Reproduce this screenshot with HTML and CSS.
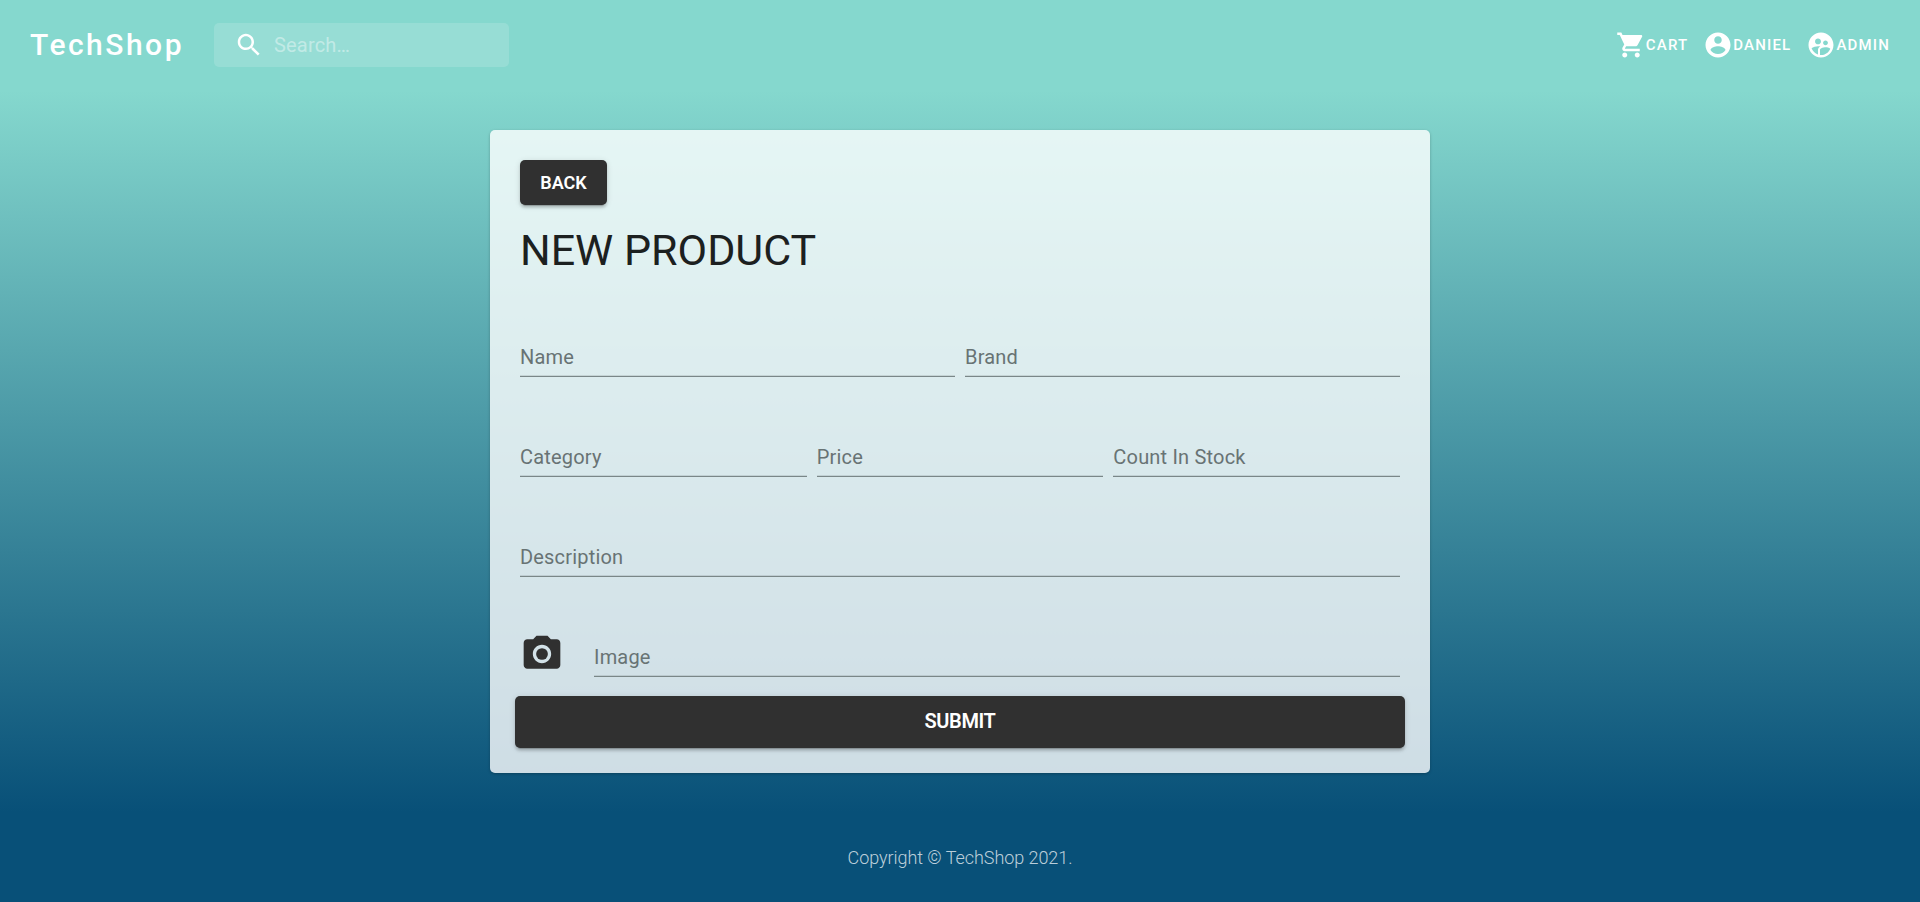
FILE: index.html
```html
<!DOCTYPE html>
<html lang="en">
<head>
<meta charset="utf-8">
<title>TechShop</title>
<link rel="stylesheet" href="styles.css">
</head>
<body>
<header class="navbar">
  <a class="brand">TechShop</a>
  <div class="search">
    <svg class="icon" viewBox="0 0 24 24"><path d="M15.5 14h-.79l-.28-.27C15.41 12.59 16 11.11 16 9.5 16 5.91 13.09 3 9.5 3S3 5.91 3 9.5 5.91 16 9.5 16c1.61 0 3.09-.59 4.23-1.57l.27.28v.79l5 4.99L20.49 19l-4.99-5zm-6 0C7.01 14 5 11.99 5 9.5S7.01 5 9.5 5 14 7.01 14 9.5 11.99 14 9.5 14z"/></svg>
    <span class="search-text">Search…</span>
  </div>
  <nav class="links">
    <a class="link"><svg class="icon" viewBox="0 0 24 24"><path d="M7 18c-1.100 0-1.990.9-1.990 2S5.900 22 7 22s2-.9 2-2-.9-2-2-2zM1 2v2h2l3.600 7.590-1.350 2.450c-.16.28-.25.61-.25.96 0 1.100.9 2 2 2h12v-2H7.420c-.14 0-.25-.11-.25-.25l.03-.12.9-1.630h7.450c.75 0 1.410-.41 1.750-1.030l3.580-6.490c.08-.14.12-.31.12-.48 0-.55-.45-1-1-1H5.210l-.94-2H1zm16 16c-1.100 0-1.990.9-1.990 2s.89 2 1.990 2 2-.9 2-2-.9-2-2-2z"/></svg><span class="link-text">CART</span></a>
    <a class="link"><svg class="icon" viewBox="0 0 24 24"><path d="M12 2C6.480 2 2 6.480 2 12s4.480 10 10 10 10-4.480 10-10S17.520 2 12 2zm0 3c1.660 0 3 1.340 3 3s-1.340 3-3 3-3-1.340-3-3 1.340-3 3-3zm0 14.200c-2.500 0-4.710-1.280-6-3.220.03-1.990 4-3.080 6-3.080 1.990 0 5.970 1.090 6 3.080-1.290 1.940-3.500 3.220-6 3.220z"/></svg><span class="link-text">DANIEL</span></a>
    <a class="link"><svg class="icon" viewBox="0 0 24 24"><path d="M11.990 2c-5.520 0-10 4.480-10 10s4.480 10 10 10 10-4.480 10-10-4.480-10-10-10zm3.610 6.340c1.070 0 1.930.86 1.930 1.930 0 1.070-.86 1.930-1.930 1.930-1.070 0-1.930-.86-1.930-1.930-.01-1.070.86-1.930 1.930-1.930zm-6-1.580c1.300 0 2.360 1.060 2.360 2.360 0 1.300-1.060 2.360-2.360 2.360s-2.360-1.060-2.360-2.360c0-1.310 1.050-2.360 2.360-2.360zm0 9.130v3.750c-2.400-.75-4.300-2.600-5.140-4.960 1.050-1.120 3.670-1.690 5.140-1.690.53 0 1.200.08 1.900.22-1.640.87-1.900 2.020-1.900 2.680zM11.990 20c-.27 0-.53-.01-.79-.04v-4.070c0-1.420 2.940-2.130 4.400-2.130 1.070 0 2.920.39 3.840 1.150-1.170 2.970-4.060 5.090-7.450 5.090z"/></svg><span class="link-text">ADMIN</span></a>
  </nav>
</header>
<main class="page">
  <section class="card">
    <button class="button back">BACK</button>
    <h1 class="title">NEW PRODUCT</h1>
    <form class="form">
      <div class="row">
        <label class="field"><span class="label">Name</span></label>
        <label class="field"><span class="label">Brand</span></label>
      </div>
      <div class="row">
        <label class="field"><span class="label">Category</span></label>
        <label class="field"><span class="label">Price</span></label>
        <label class="field"><span class="label">Count In Stock</span></label>
      </div>
      <div class="row">
        <label class="field"><span class="label">Description</span></label>
      </div>
      <div class="row image-row">
        <svg class="camera" viewBox="0 0 24 24"><circle cx="12" cy="12" r="3.200"/><path d="M9 2L7.170 4H4c-1.100 0-2 .9-2 2v12c0 1.100.9 2 2 2h16c1.100 0 2-.9 2-2V6c0-1.100-.9-2-2-2h-3.170L15 2H9zm3 15c-2.760 0-5-2.240-5-5s2.240-5 5-5 5 2.240 5 5-2.240 5-5 5z"/></svg>
        <label class="field"><span class="label">Image</span></label>
      </div>
      <button class="button submit" type="button">SUBMIT</button>
    </form>
  </section>
</main>
<footer class="footer">Copyright © TechShop 2021.</footer>
</body>
</html>
```
FILE: styles.css
```css
* { box-sizing: border-box; }

body {
  margin: 0;
  height: 902px;
  overflow: hidden;
  display: flex;
  flex-direction: column;
  font-family: Roboto, "Liberation Sans", sans-serif;
  background: linear-gradient(to bottom, #85d8ce 10%, #085078 90%);
}

.navbar {
  height: 90px;
  padding: 0 30px;
  display: flex;
  align-items: center;
  color: #fff;
}

.brand {
  width: 184px;
  font-size: 30px;
  font-weight: 500;
  letter-spacing: 2.5px;
  line-height: 40px;
}

.icon {
  width: 30px;
  height: 30px;
  flex: none;
  fill: currentColor;
}

.search {
  width: 295px;
  height: 44px;
  padding-left: 20px;
  display: flex;
  align-items: center;
  border-radius: 5px;
  background: rgba(255, 255, 255, 0.15);
}

.search-text {
  margin-left: 10px;
  font-size: 20px;
  line-height: 24px;
  letter-spacing: 0.19px;
  color: rgba(255, 255, 255, 0.42);
}

.links {
  margin-left: auto;
  display: flex;
  gap: 15px;
}

.link {
  display: flex;
  align-items: center;
}

.link-text {
  font-size: 15px;
  font-weight: 500;
  letter-spacing: 1.17px;
}

.page {
  height: 722px;
  padding-top: 40px;
}

.card {
  width: 940px;
  height: 643px;
  margin: 0 auto;
  padding: 30px;
  display: flex;
  flex-direction: column;
  border-radius: 5px;
  background: rgba(255, 255, 255, 0.8);
  box-shadow: 0 1px 3px rgba(0, 0, 0, 0.25);
}

.button {
  border: 0;
  padding: 0;
  flex: none;
  border-radius: 5px;
  background: #303030;
  color: #fff;
  font-family: inherit;
  font-weight: 600;
  box-shadow: 0 4px 1px -3px rgba(0, 0, 0, 0.2), 0 2.5px 2.5px rgba(0, 0, 0, 0.14), 0 1px 6px rgba(0, 0, 0, 0.12);
}

.back {
  width: 87px;
  height: 45px;
  font-size: 18px;
}

.title {
  margin: 19px 0 0;
  height: 53px;
  flex: none;
  font-size: 43px;
  font-weight: 370;
  line-height: 52px;
  color: #1c2020;
}

.form {
  flex: none;
  display: flex;
  flex-direction: column;
}

.row {
  height: 100px;
  display: flex;
  align-items: flex-end;
  gap: 10px;
}

.field {
  flex: 1 1 0;
  height: 40px;
  border-bottom: 1px solid #7a8788;
  box-shadow: inset 0 -1px rgba(0, 0, 0, 0.1);
}

.label {
  display: block;
  font-size: 20px;
  line-height: 40px;
  letter-spacing: 0.19px;
  color: #687374;
}

.image-row { gap: 30px; }

.camera {
  width: 44px;
  height: 44px;
  margin-bottom: 1px;
  flex: none;
  fill: #303030;
}

.submit {
  height: 52px;
  margin: 19px -5px 0;
  padding-bottom: 2px;
  font-size: 20px;
  letter-spacing: -0.4px;
}

.footer {
  height: 90px;
  line-height: 91px;
  text-align: center;
  font-size: 18px;
  font-weight: 300;
  letter-spacing: -0.06px;
  color: rgba(255, 255, 255, 0.74);
}
```
